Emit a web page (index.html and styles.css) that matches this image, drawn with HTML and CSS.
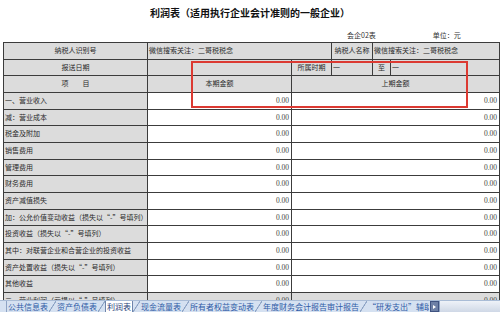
FILE: index.html
```html
<!DOCTYPE html>
<html lang="zh-CN">
<head>
<meta charset="utf-8">
<title>利润表</title>
<link rel="stylesheet" href="styles.css">
</head>
<body>
<div class="window">
  <div class="sheet">
    <div class="title">利润表（适用执行企业会计准则的一般企业）</div>
    <div class="meta"><span class="code">会企02表</span><span class="unit">单位：元</span></div>
    <div class="grid">
      <div class="c h ctr">纳税人识别号</div>
      <div class="c h s2">微信搜索关注：二哥税税念</div>
      <div class="c h ctr">纳税人名称</div>
      <div class="c h s2">微信搜索关注：二哥税税念</div>

      <div class="c h ctr">报送日期</div>
      <div class="c h"></div>
      <div class="c h ctr">所属时期</div>
      <div class="c h">一</div>
      <div class="c h ctr">至</div>
      <div class="c h">一</div>

      <div class="c h ctr">项　　目</div>
      <div class="c h ctr">本期金额</div>
      <div class="c h ctr s4">上期金额</div>

      <div class="c h">一、营业收入</div><div class="c num">0.00</div><div class="c num s4">0.00</div>
      <div class="c h">减：营业成本</div><div class="c num">0.00</div><div class="c num s4">0.00</div>
      <div class="c h">税金及附加</div><div class="c num">0.00</div><div class="c num s4">0.00</div>
      <div class="c h">销售费用</div><div class="c num">0.00</div><div class="c num s4">0.00</div>
      <div class="c h">管理费用</div><div class="c num">0.00</div><div class="c num s4">0.00</div>
      <div class="c h">财务费用</div><div class="c num">0.00</div><div class="c num s4">0.00</div>
      <div class="c h">资产减值损失</div><div class="c num">0.00</div><div class="c num s4">0.00</div>
      <div class="c h">加：公允价值变动收益（损失以“-”号填列）</div><div class="c num">0.00</div><div class="c num s4">0.00</div>
      <div class="c h">投资收益（损失以“-”号填列）</div><div class="c num">0.00</div><div class="c num s4">0.00</div>
      <div class="c h">其中：对联营企业和合营企业的投资收益</div><div class="c num">0.00</div><div class="c num s4">0.00</div>
      <div class="c h">资产处置收益（损失以“-”号填列）</div><div class="c num">0.00</div><div class="c num s4">0.00</div>
      <div class="c h">其他收益</div><div class="c num">0.00</div><div class="c num s4">0.00</div>
      <div class="c h">二、营业利润（亏损以“-”号填列）</div><div class="c h num">0.00</div><div class="c h num s4">0.00</div>
    </div>
    <div class="highlight"></div>
  </div>
  <div class="tabs">
    <span class="lead"></span>
    <span class="tab">公共信息表</span><span class="sep"></span>
    <span class="tab">资产负债表</span><span class="sep"></span>
    <span class="tab active">利润表</span><span class="sep"></span>
    <span class="tab">现金流量表</span><span class="sep"></span>
    <span class="tab">所有者权益变动表</span><span class="sep"></span>
    <span class="tab">年度财务会计报告审计报告</span><span class="sep"></span>
    <span class="tab last">“研发支出”辅助</span>
    <span class="nav"></span>
    <span class="scroll"></span>
  </div>
</div>
</body>
</html>
```
FILE: styles.css
```css
* { box-sizing: border-box; }
html, body { margin: 0; padding: 0; background: #fff; }
body {
  font-family: "Noto Sans CJK SC", "Liberation Sans", sans-serif;
  color: #222;
}
.window {
  width: 500px;
  height: 312px;
  display: flex;
  flex-direction: column;
  overflow: hidden;
}
.sheet {
  position: relative;
  height: 300px;
  overflow: hidden;
  flex: none;
}
.title {
  height: 28px;
  padding-top: 6px;
  text-align: center;
  font-size: 10px;
  line-height: 14px;
  font-weight: bold;
  color: #111;
}
.meta {
  height: 14px;
  display: flex;
  font-size: 7px;
  line-height: 14px;
  color: #333;
}
.meta .code { margin-left: 347px; }
.meta .unit { margin-left: 57px; }
.grid {
  margin-left: 3px;
  display: grid;
  grid-template-columns: 144px 144px 40px 41px 18px 109px;
  grid-auto-rows: 16.67px;
  border-top: 1px solid #3c3c3c;
  border-left: 1px solid #3c3c3c;
  width: 497px;
}
.c {
  border-right: 1px solid #3c3c3c;
  border-bottom: 1px solid #3c3c3c;
  font-size: 7px;
  line-height: 15px;
  padding: 0 1px;
  white-space: nowrap;
  overflow: hidden;
  color: #2a2a2a;
  background: #fff;
}
.h { background: #dcdcdc; }
.ctr { text-align: center; }
.s2 { grid-column: span 2; }
.s4 { grid-column: span 4; }
.num {
  text-align: right;
  padding-right: 2px;
  font-family: "Liberation Serif", "Noto Sans CJK SC", serif;
  font-size: 7.5px;
  color: #444;
}
.highlight {
  position: absolute;
  left: 191px;
  top: 61px;
  width: 277px;
  height: 47px;
  border: 2px solid #dc3a32;
}
.tabs {
  height: 12px;
  flex: none;
  display: flex;
  align-items: stretch;
  background: #d5e1f1;
  border-top: 1px solid #a9bcd6;
  font-size: 8px;
  line-height: 11px;
  color: #2f5ba6;
  white-space: nowrap;
  overflow: hidden;
}
.lead {
  width: 7px;
  border-right: 1px solid #8ea3c4;
}
.tab { padding: 0 1px; }
.tab.active {
  background: #fff;
  color: #1f3f7a;
  border-left: 1px solid #6e84aa;
  border-right: 1px solid #6e84aa;
}
.tab.last { width: 62px; overflow: hidden; }
.sep {
  width: 7px;
  background: linear-gradient(to bottom right, transparent 44%, #8fa5c6 47%, #8fa5c6 53%, transparent 56%);
}
.nav {
  width: 9px;
  margin-left: 1px;
  background: #6d80a6;
  border: 1px solid #3f5381;
  position: relative;
}
.nav::after {
  content: "";
  position: absolute;
  left: 2px;
  top: 3px;
  border-left: 3px solid #fff;
  border-top: 2px solid transparent;
  border-bottom: 2px solid transparent;
}
.scroll {
  flex: 1;
  background: linear-gradient(#eef2f8, #cfd8e6);
  border-left: 1px solid #8ea3c4;
}
```
